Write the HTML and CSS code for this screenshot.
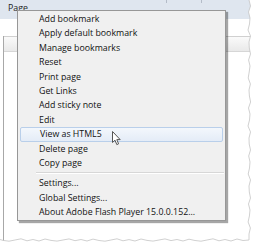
FILE: index.html
```html
<!DOCTYPE html>
<html lang="en">
<head>
    <meta charset="UTF-8">
    <title>Flash context menu</title>
    <link rel="stylesheet" href="styles.css">
</head>
<body>
    <div class="screen">
        <div class="tabbar">
            <span class="tab-label">Page</span>
            <span class="tab-cell"></span>
        </div>

        <div class="panel">
            <div class="panel-head"></div>
        </div>

        <!-- context menu lies over the page -->
        <ul class="menu">
            <li class="menu-item">Add bookmark</li>
            <li class="menu-item">Apply default bookmark</li>
            <li class="menu-item">Manage bookmarks</li>
            <li class="menu-item">Reset</li>
            <li class="menu-item">Print page</li>
            <li class="menu-item">Get Links</li>
            <li class="menu-item">Add sticky note</li>
            <li class="menu-item">Edit</li>
            <li class="menu-item is-hover">View as HTML5</li>
            <li class="menu-item">Delete page</li>
            <li class="menu-item">Copy page</li>
            <li class="menu-sep"></li>
            <li class="menu-item">Settings...</li>
            <li class="menu-item">Global Settings...</li>
            <li class="menu-item">About Adobe Flash Player 15.0.0.152...</li>
        </ul>

        <svg class="cursor" width="10" height="15" viewBox="0 0 10 15">
            <path d="M0.5 0.5 L0.5 11.5 L3 9.2 L4.8 13.6 L6.6 12.8 L4.8 8.6 L8.2 8.6 Z" fill="#fff" stroke="#555" stroke-width="1" stroke-linejoin="round"/>
        </svg>

        <!-- torn paper edge of the screenshot -->
        <svg class="torn" width="253" height="245" viewBox="0 0 253 245">
            <path fill="#fff" d="M253 0 L249 0 L250.5 6 L248.5 12 L250 18 L249.5 24 L248 30 L250.5 36 L249 42 L249.3 48 L250.5 54 L248.6 60 L250 66 L249.2 72 L248.2 78 L250.4 84 L249 90 L249.4 96 L250.6 102 L248.5 108 L250 114 L249.5 120 L248 126 L250.5 132 L249 138 L249.2 144 L250.5 150 L248.7 156 L250 162 L249.5 168 L248.2 174 L250.5 180 L249 186 L249.3 192 L250.5 198 L248.5 204 L250 210 L249.4 216 L248.1 222 L250.4 228 L249 234 L249 240 L243 240.5 L237 239 L231 241 L225 239.5 L219 240.8 L213 238.8 L207 240 L201 241.2 L195 240.5 L189 239.2 L183 241 L177 239.5 L171 240.6 L165 238.9 L159 240 L153 241.1 L147 240.4 L141 239 L135 241 L129 239.6 L123 240.8 L117 238.8 L111 240 L105 241.2 L99 240.5 L93 239.1 L87 241 L81 239.5 L75 240.7 L69 238.9 L63 240 L57 241.1 L51 240.4 L45 239 L39 241 L33 239.5 L27 240.8 L21 238.8 L15 240 L9 241.2 L3 240.4 L0 239.5 L0 245 L253 245 Z"/>
            <path fill="none" stroke="#c4c4c4" stroke-width="0.8" d="M249 0 L250.5 6 L248.5 12 L250 18 L249.5 24 L248 30 L250.5 36 L249 42 L249.3 48 L250.5 54 L248.6 60 L250 66 L249.2 72 L248.2 78 L250.4 84 L249 90 L249.4 96 L250.6 102 L248.5 108 L250 114 L249.5 120 L248 126 L250.5 132 L249 138 L249.2 144 L250.5 150 L248.7 156 L250 162 L249.5 168 L248.2 174 L250.5 180 L249 186 L249.3 192 L250.5 198 L248.5 204 L250 210 L249.4 216 L248.1 222 L250.4 228 L249 234 L249 240 L243 240.5 L237 239 L231 241 L225 239.5 L219 240.8 L213 238.8 L207 240 L201 241.2 L195 240.5 L189 239.2 L183 241 L177 239.5 L171 240.6 L165 238.9 L159 240 L153 241.1 L147 240.4 L141 239 L135 241 L129 239.6 L123 240.8 L117 238.8 L111 240 L105 241.2 L99 240.5 L93 239.1 L87 241 L81 239.5 L75 240.7 L69 238.9 L63 240 L57 241.1 L51 240.4 L45 239 L39 241 L33 239.5 L27 240.8 L21 238.8 L15 240 L9 241.2 L3 240.4 L0 239.5"/>
        </svg>
    </div>
</body>
</html>
```

FILE: styles.css
```css
/* General */
body {
    margin: 0;
    background-color: #ffffff;
    font-family: "Open Sans", "Noto Sans", sans-serif;
}

.screen {
    position: relative;
    width: 253px;
    height: 245px;
    overflow: hidden;
    background-color: #ffffff;
}

/* Tab bar behind the menu */
.tabbar {
    display: flex;
    align-items: flex-start;
    height: 19px;
    padding-left: 8px;
    background-color: #dfe6ef;
}

.tab-label {
    width: 158px;
    font-size: 8.8px;
    line-height: 17px;
    color: #1b1b1b;
}

.tab-cell {
    width: 34px;
    height: 3px;
    border-left: 1px solid #b4bcc8;
    border-right: 1px solid #b4bcc8;
}

/* Panel below */
.panel {
    margin: 17px 0 0 3px;
    height: 205px;
    border-left: 1px solid #a8a8a8;
}

.panel-head {
    height: 14px;
    border-top: 1px solid #d0d0d0;
    border-bottom: 1px solid #d6d6d6;
    background: linear-gradient(#fafafa, #e9e9e9);
}

/* Context menu */
.menu {
    position: absolute;
    top: 10px;
    left: 17px;
    width: 205px;
    margin: 0;
    padding: 1px;
    list-style: none;
    background-color: #f0f0f0;
    border: 1px solid #979797;
    box-shadow: 2px 2px 1px rgba(0, 0, 0, 0.35);
}

.menu-item {
    height: 14.4px;
    padding-left: 20px;
    font-size: 8.8px;
    line-height: 14.4px;
    color: #111;
    white-space: nowrap;
}

.menu-item.is-hover {
    height: 12.4px;
    line-height: 12.4px;
    margin: 0 0 0 1px;
    padding-left: 19px;
    width: 182px;
    border: 1px solid #b9cfea;
    border-radius: 2px;
    background: linear-gradient(#f3f7fc, #e4ecf7);
}

.menu-sep {
    height: 1px;
    margin: 2px 0 2px 17px;
    background-color: #d7d7d7;
    border-bottom: 1px solid #ffffff;
}

/* Overlays */
.cursor {
    position: absolute;
    top: 131px;
    left: 112px;
}

.torn {
    position: absolute;
    top: 0;
    left: 0;
}
```
